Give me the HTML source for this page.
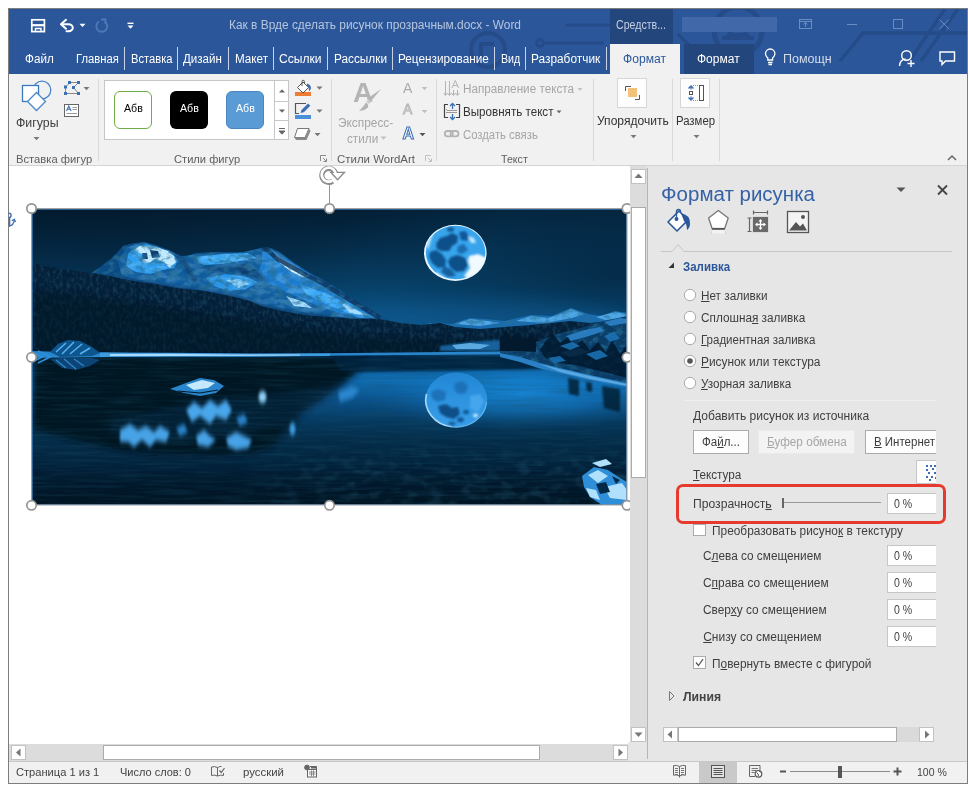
<!DOCTYPE html>
<html lang="ru">
<head>
<meta charset="utf-8">
<title>Word</title>
<style>
html,body{margin:0;padding:0;background:#fff;}
body{width:968px;height:792px;overflow:hidden;font-family:"Liberation Sans",sans-serif;}
#root{position:relative;width:968px;height:792px;overflow:hidden;background:#fff;}
.a{position:absolute;box-sizing:border-box;}
.t{position:absolute;white-space:nowrap;transform-origin:0 50%;display:inline-block;font-family:"Liberation Sans",sans-serif;}
u{text-decoration:underline;text-underline-offset:1px;}
svg{position:absolute;overflow:visible;}
</style>
</head>
<body>
<div id="root">
<!-- window frame -->
<div class="a" style="left:8px;top:8px;width:960px;height:776px;background:#f1f1f1;border:1px solid #7d7d7d;"></div>
<!-- title + tab bar -->
<div class="a" style="left:9px;top:9px;width:958px;height:65px;background:#2b579a;overflow:hidden;">
  <!-- faint circuit decoration -->
  <svg width="958" height="65" viewBox="9 9 958 65" style="left:0;top:0;">
    <g fill="none" stroke="#254c89" stroke-width="3">
      <path d="M566 25 H615 M545 43 H604"/>
      <circle cx="540" cy="43" r="3.5"/>
      <circle cx="488" cy="50" r="17" stroke-width="4"/>
      <path d="M481 60 V44 H494" stroke-width="4"/>
      <path d="M678 34 q22 26 58 26 M690 50 q14 12 40 14"/>
      <circle cx="738" cy="31" r="24" stroke-width="5"/>
      <path d="M722 38 h32 M738 22 l-9 13 h18 z" stroke-width="4"/>
      <path d="M840 61 L863 33 H967 M910 60 L945 9 M921 61 L958 9" stroke-width="3.5"/>
    </g>
  </svg>
</div>
<!-- contextual "Средств..." -->
<div class="a" style="left:610px;top:9px;width:63px;height:35px;background:#23467c;"></div>
<!-- blurred account rect -->
<div class="a" style="left:682px;top:17px;width:95px;height:15px;background:#4168a8;"></div>
<!-- active tab -->
<div class="a" style="left:610px;top:44px;width:70px;height:31px;background:#f1f1f1;"></div>
<!-- second Format tab dark -->
<div class="a" style="left:684px;top:44px;width:70px;height:30px;background:#23467c;"></div>
<!-- tab separators -->
<div class="a" style="left:124px;top:47px;width:1px;height:23px;background:#c9d3e6;"></div>
<div class="a" style="left:177px;top:47px;width:1px;height:23px;background:#c9d3e6;"></div>
<div class="a" style="left:228px;top:47px;width:1px;height:23px;background:#c9d3e6;"></div>
<div class="a" style="left:273px;top:47px;width:1px;height:23px;background:#c9d3e6;"></div>
<div class="a" style="left:327px;top:47px;width:1px;height:23px;background:#c9d3e6;"></div>
<div class="a" style="left:392px;top:47px;width:1px;height:23px;background:#c9d3e6;"></div>
<div class="a" style="left:494px;top:47px;width:1px;height:23px;background:#c9d3e6;"></div>
<div class="a" style="left:525px;top:47px;width:1px;height:23px;background:#c9d3e6;"></div>
<div class="a" style="left:606px;top:47px;width:1px;height:23px;background:#c9d3e6;"></div>
<!-- ribbon bottom border -->
<div class="a" style="left:9px;top:165px;width:958px;height:1px;background:#d4d4d4;"></div>
<!-- group separators -->
<div class="a" style="left:98px;top:79px;width:1px;height:82px;background:#d9d9d9;"></div>
<div class="a" style="left:331px;top:79px;width:1px;height:82px;background:#d9d9d9;"></div>
<div class="a" style="left:436px;top:79px;width:1px;height:82px;background:#d9d9d9;"></div>
<div class="a" style="left:593px;top:79px;width:1px;height:82px;background:#d9d9d9;"></div>
<div class="a" style="left:672px;top:79px;width:1px;height:82px;background:#d9d9d9;"></div>
<div class="a" style="left:719px;top:79px;width:1px;height:82px;background:#d9d9d9;"></div>
<!-- style gallery -->
<div class="a" style="left:104px;top:80px;width:185px;height:60px;background:#fff;border:1px solid #c6c6c6;"></div>
<div class="a" style="left:274px;top:80px;width:1px;height:60px;background:#c6c6c6;"></div>
<div class="a" style="left:274px;top:101px;width:15px;height:1px;background:#c6c6c6;"></div>
<div class="a" style="left:274px;top:120px;width:15px;height:1px;background:#c6c6c6;"></div>
<div class="a" style="left:114px;top:91px;width:38px;height:38px;background:#fff;border:1px solid #70ad47;border-radius:6px;"></div>
<div class="a" style="left:170px;top:91px;width:38px;height:38px;background:#000;border-radius:6px;"></div>
<div class="a" style="left:226px;top:91px;width:38px;height:38px;background:#5b9bd5;border:1px solid #4a86c0;border-radius:6px;"></div>
<!-- arrange / size icon boxes -->
<div class="a" style="left:617px;top:78px;width:30px;height:30px;background:#fdfdfd;border:1px solid #d6d6d6;"></div>
<div class="a" style="left:680px;top:78px;width:30px;height:30px;background:#fdfdfd;border:1px solid #d6d6d6;"></div>
<!-- document area -->
<div class="a" style="left:9px;top:166px;width:621px;height:578px;background:#fff;"></div>
<!-- vertical scrollbar -->
<div class="a" style="left:630px;top:166px;width:17px;height:576px;background:#dcdcdc;"></div>
<div class="a" style="left:631px;top:169px;width:15px;height:15px;background:#fff;border:1px solid #c2c2c2;"></div>
<div class="a" style="left:631px;top:207px;width:15px;height:271px;background:#fff;border:1px solid #ababab;"></div>
<div class="a" style="left:631px;top:727px;width:15px;height:15px;background:#fff;border:1px solid #c2c2c2;"></div>
<div class="a" style="left:628px;top:742px;width:19px;height:19px;background:#e6e6e6;"></div>
<!-- horizontal scrollbar -->
<div class="a" style="left:9px;top:744px;width:619px;height:17px;background:#dcdcdc;"></div>
<div class="a" style="left:11px;top:745px;width:15px;height:15px;background:#fff;border:1px solid #c2c2c2;"></div>
<div class="a" style="left:103px;top:745px;width:437px;height:15px;background:#fff;border:1px solid #ababab;"></div>
<div class="a" style="left:613px;top:745px;width:15px;height:15px;background:#fff;border:1px solid #c2c2c2;"></div>
<!-- pane bg -->
<div class="a" style="left:647px;top:166px;width:320px;height:595px;background:#e6e6e6;"></div>
<div class="a" style="left:647px;top:168px;width:1px;height:591px;background:#b5b5b5;"></div>

<!-- chrome icons overlay -->
<svg class="a" style="left:0;top:0;" width="968" height="170" viewBox="0 0 968 170">
  <!-- save -->
  <g fill="none" stroke="#fff" stroke-width="1.7">
    <rect x="31.8" y="19.800" width="12.600" height="11.800"/>
    <path d="M31 25.200 h14" stroke-width="2.200"/>
    <path d="M35.500 31.500 v-3 h5.500 v3" stroke-width="1.400"/>
  </g>
  <!-- undo -->
  <g fill="none" stroke="#fff" stroke-width="2" stroke-linecap="round" stroke-linejoin="round">
    <path d="M66 19.800 L61 24.300 L66 28.800"/>
    <path d="M61.500 24.300 H68.500 a4.300 3.500 0 0 1 0 7 H66.500"/>
  </g>
  <path d="M79.500 23.800 h6 l-3 3.200 z" fill="#fff"/>
  <!-- redo (dim) -->
  <g fill="none" stroke="#4f78b7" stroke-width="1.800">
    <path d="M99 21.500 a5.500 5.500 0 1 0 5.500 0"/>
    <path d="M101 19.500 h4.500 v4.500"/>
  </g>
  <!-- customize QAT -->
  <path d="M127.500 23.300 h6" stroke="#fff" stroke-width="1.400"/>
  <path d="M127.500 25.600 h6 l-3 3.200 z" fill="#fff"/>
  <!-- window controls (dim) -->
  <g fill="none" stroke="#6a8dc6" stroke-width="1">
    <rect x="799.500" y="19.500" width="12" height="9"/>
    <path d="M799.500 21.500 h12 M805.500 27 v-4 M803.500 24.500 l2 -2 l2 2"/>
    <path d="M847 24.500 h10"/>
    <rect x="893.500" y="19.500" width="9" height="9"/>
    <path d="M939.500 19.500 l9.500 9.500 M949 19.500 l-9.500 9.500"/>
  </g>
  <!-- lightbulb -->
  <g fill="none" stroke="#fff" stroke-width="1.300">
    <path d="M767.800 60 v-2 q-2.300 -2 -2.300 -4.300 a4.700 4.700 0 0 1 9.400 0 q0 2.300 -2.300 4.300 v2 z"/>
    <path d="M768 62.500 h4.500 M768.500 64.500 h3.500"/>
  </g>
  <!-- share -->
  <g fill="none" stroke="#fff" stroke-width="1.400">
    <circle cx="906.500" cy="55.500" r="4.800"/>
    <path d="M899.500 66 q0.500 -6.500 6 -7"/>
    <path d="M907.500 63.500 h7 M911 60 v7"/>
  </g>
  <!-- comment -->
  <path d="M940 52 h14.500 v9 h-9 l-3.500 3.500 v-3.500 h-2 z" fill="none" stroke="#fff" stroke-width="1.400"/>

  <!-- shapes big icon -->
  <g fill="#fff" stroke="#4a86c8" stroke-width="1.300">
    <circle cx="42" cy="90" r="8.800" fill="none"/>
    <rect x="22.500" y="85.500" width="16" height="16" stroke="#3c78c0"/>
    <path d="M36.500 92.500 L45.500 101.500 L36.500 110.500 L27.500 101.500 Z"/>
  </g>
  <path d="M33.500 137 h6 l-3 3.200 z" fill="#777"/>
  <!-- edit shape -->
  <g stroke="#8a8a8a" stroke-width="1" fill="none">
    <path d="M70 82.500 H78.500 M78.500 82.500 L73.500 87.500 L78.500 93.500 M78.500 93.500 H66 M65.500 93 V87 M66 86.500 L69.500 83"/>
  </g>
  <g fill="#3c6eb4">
    <rect x="68" y="81" width="3" height="3"/><rect x="77" y="81" width="3" height="3"/>
    <rect x="64" y="85.500" width="3" height="3"/><rect x="72" y="86" width="3" height="3"/>
    <rect x="64" y="92" width="3" height="3"/><rect x="77" y="92" width="3" height="3"/>
  </g>
  <path d="M83.500 87 h6 l-3 3.200 z" fill="#777"/>
  <!-- text box icon -->
  <rect x="64.500" y="104.500" width="14" height="12" fill="#fff" stroke="#666" stroke-width="1"/>
  <path d="M66.500 111 l2.300 -5 l2.300 5 M67.300 109.300 h3" fill="none" stroke="#3c6eb4" stroke-width="1.100"/>
  <path d="M72.500 107.500 h4.500 M72.500 109.500 h4.500 M66.500 113.500 h10.500" stroke="#999" stroke-width="1"/>
  <!-- gallery scroll arrows -->
  <path d="M279 92.500 h6 l-3 -3.200 z" fill="#666"/>
  <path d="M279 109.500 h6 l-3 3.200 z" fill="#666"/>
  <path d="M279 128.500 h6 M279 131 h6 l-3 3.200 z" fill="#666" stroke="#666" stroke-width="1"/>
  <!-- shape fill -->
  <rect x="295" y="92" width="16" height="4" fill="#ed7d31"/>
  <path d="M297.500 87.500 L303 82 L308.500 87.500 L303 93 Z" fill="#fff" stroke="#555" stroke-width="1"/>
  <path d="M302 86 V81.500 a1.200 1.200 0 0 1 2.400 0 V84" fill="none" stroke="#555" stroke-width="1"/>
  <path d="M307 83.500 q4 1 4 5 l-1.800 3 q0 -4 -2.200 -6 z" fill="#3c6eb4"/>
  <path d="M316.500 86.500 h6 l-3 3.200 z" fill="#777"/>
  <!-- shape outline -->
  <rect x="295" y="115" width="16" height="4" fill="#4a90d9"/>
  <path d="M306 103.500 H295.500 V113.500 H299" fill="none" stroke="#555" stroke-width="1.200"/>
  <path d="M300.500 113 L301.500 110 L308 103.500 L310.300 105.800 L303.800 112.300 Z" fill="#3c6eb4"/>
  <path d="M316.500 109.500 h6 l-3 3.200 z" fill="#777"/>
  <!-- shape effects -->
  <path d="M297.500 128.500 H309 L305 137.500 H294.500 Z" fill="#fff" stroke="#777" stroke-width="1"/>
  <path d="M309 128.500 L310.500 131 L306.500 140 L305 137.500 Z M294.500 137.500 H305 L306.500 140 H296 Z" fill="#8a8a8a"/>
  <path d="M314.500 133 h6 l-3 3.200 z" fill="#777"/>
  <!-- dialog launchers -->
  <g fill="none" stroke="#8a8a8a" stroke-width="1">
    <path d="M320.500 161 V155.500 H326"/><path d="M323 158 l3.500 3.500 M326.500 158.500 v3 h-3"/>
  </g>
  <g fill="none" stroke="#c0c0c0" stroke-width="1">
    <path d="M425.500 161 V155.500 H431"/><path d="M428 158 l3.500 3.500 M431.500 158.500 v3 h-3"/>
  </g>
  <!-- WordArt quick styles icon -->
  <text x="353" y="102" font-family="Liberation Sans, sans-serif" font-size="28" font-weight="bold" fill="#b4b4b4">A</text>
  <path d="M381 89 L372 100 L369 97.500 Z" fill="#b4b4b4"/>
  <path d="M368.500 99 L371 101.500 L369 104 L366.500 101.500 Z" fill="#c8c8c8"/>
  <path d="M366 102.500 q3 2 2 5 q-3 3 -9 3.500 q5 -5 7 -8.500 z" fill="#b4b4b4"/>
  <path d="M380.500 136.500 h6 l-3 3.200 z" fill="#c0c0c0"/>
  <!-- small A icons -->
  <text x="403" y="92.600" font-family="Liberation Sans, sans-serif" font-size="14" fill="#ababab">A</text>
  <text x="403" y="113.600" font-family="Liberation Sans, sans-serif" font-size="14" fill="#f1f1f1" stroke="#b4b4b4" stroke-width="0.9">A</text>
  <text x="402.500" y="139" font-family="Liberation Sans, sans-serif" font-size="16" font-weight="bold" fill="#fff" stroke="#3c6eb4" stroke-width="1">A</text>
  <path d="M421.500 87 h6 l-3 3.200 z" fill="#c0c0c0"/>
  <path d="M421.500 110 h6 l-3 3.200 z" fill="#c0c0c0"/>
  <path d="M419.500 133 h6 l-3 3.200 z" fill="#555"/>
  <!-- text direction icon -->
  <g fill="none" stroke="#b4b4b4" stroke-width="1">
    <path d="M445.500 81 V95 M449.500 81 V95 M453.500 90 V95 M457.500 90 V95"/>
    <path d="M443.500 93 l2 2.500 l2 -2.500 M447.500 93 l2 2.500 l2 -2.500 M451.500 93 l2 2.500 l2 -2.500 M455.500 93 l2 2.500 l2 -2.500"/>
    <path d="M452 88 l3.300 -7.500 l3.300 7.500 M453.200 85.500 h4.200"/>
  </g>
  <!-- align text icon -->
  <g fill="none" stroke="#444" stroke-width="1.200">
    <path d="M448 104.500 H444.500 V117.500 H448 M456 104.500 H459.500 V117.500 H456"/>
  </g>
  <path d="M447 110.500 h10 M447 112.500 h10" stroke="#999" stroke-width="1"/>
  <path d="M446.500 109 v1 M446.500 112 v1" stroke="#999"/>
  <g stroke="#3c6eb4" stroke-width="1.300" fill="none">
    <path d="M452.500 109 V104 M450 106 l2.500 -2.500 l2.500 2.500"/>
    <path d="M452.500 114 V119 M450 117 l2.500 2.500 l2.500 -2.500"/>
  </g>
  <!-- link icon -->
  <g fill="none" stroke="#b4b4b4" stroke-width="1.800">
    <rect x="444.800" y="131" width="8" height="5.400" rx="2.700"/>
    <rect x="450.500" y="131" width="8" height="5.400" rx="2.700"/>
  </g>
  <!-- dropdown arrows after labels -->
  <path d="M577.500 88 h5 l-2.500 2.800 z" fill="#c0c0c0"/>
  <path d="M556.500 110.500 h5 l-2.500 2.800 z" fill="#666"/>
  <!-- arrange icon -->
  <rect x="628" y="88" width="9" height="9" fill="#f2c27a"/>
  <path d="M625.500 91 V86.500 H631 M635 99.500 H639.500 V95" fill="none" stroke="#555" stroke-width="1"/>
  <path d="M630.500 135 h6 l-3 3.200 z" fill="#777"/>
  <!-- size icon -->
  <rect x="699.500" y="85.500" width="4" height="15" fill="#fff" stroke="#555" stroke-width="1"/>
  <path d="M693 85.500 h5.500 M693 100.500 h5.500" stroke="#999" stroke-width="1" stroke-dasharray="1 1"/>
  <rect x="689.500" y="91.500" width="3" height="3" fill="#fff" stroke="#555" stroke-width="1"/>
  <path d="M688.500 88.500 l2.500 -2.500 l2.500 2.500 M691 86.500 v3 M688.500 97.500 l2.500 2.500 l2.500 -2.500 M691 99.500 v-3" fill="none" stroke="#3c6eb4" stroke-width="1.300"/>
  <path d="M693.500 135 h6 l-3 3.200 z" fill="#777"/>
  <!-- collapse ribbon chevron -->
  <path d="M948 160 l4 -4 l4 4" fill="none" stroke="#666" stroke-width="1.500"/>
</svg>
<!-- picture -->
<svg class="a" style="left:32px;top:209px;" width="595" height="296" viewBox="32 209 595 296">
<defs>
  <linearGradient id="sky" x1="0" y1="0" x2="0" y2="1">
    <stop offset="0" stop-color="#04253e"/><stop offset="0.21" stop-color="#053354"/><stop offset="0.41" stop-color="#073f66"/><stop offset="0.61" stop-color="#084874"/><stop offset="0.71" stop-color="#0a4e7e"/><stop offset="1" stop-color="#0b5388"/>
  </linearGradient>
  <radialGradient id="skyr" cx="1" cy="0.45" r="0.45">
    <stop offset="0" stop-color="#020f1d" stop-opacity="0.42"/><stop offset="1" stop-color="#020f1d" stop-opacity="0"/>
  </radialGradient>
  <radialGradient id="skyd" cx="0.1" cy="0.05" r="0.7">
    <stop offset="0" stop-color="#020f1d" stop-opacity="0.5"/><stop offset="0.6" stop-color="#020f1d" stop-opacity="0.3"/><stop offset="1" stop-color="#020f1d" stop-opacity="0"/>
  </radialGradient>
  <linearGradient id="lake" x1="0" y1="0" x2="0" y2="1">
    <stop offset="0" stop-color="#0a4a7c"/><stop offset="0.11" stop-color="#0e66a8"/><stop offset="0.17" stop-color="#1070b8"/><stop offset="0.31" stop-color="#0a5088"/><stop offset="0.44" stop-color="#063a60"/><stop offset="0.57" stop-color="#042c48"/><stop offset="0.76" stop-color="#03223a"/><stop offset="1" stop-color="#021826"/>
  </linearGradient>
  <radialGradient id="lglow" cx="0.5" cy="0.5" r="0.5">
    <stop offset="0" stop-color="#1a8ee0" stop-opacity="0.75"/><stop offset="0.5" stop-color="#1580cc" stop-opacity="0.5"/><stop offset="1" stop-color="#0f5c98" stop-opacity="0"/>
  </radialGradient>
  <radialGradient id="moon" cx="0.45" cy="0.45" r="0.62">
    <stop offset="0" stop-color="#5cb2f0"/><stop offset="0.7" stop-color="#8fd0fa"/><stop offset="1" stop-color="#f4fcff"/>
  </radialGradient>
  <filter id="b05" x="-10%" y="-10%" width="120%" height="120%"><feGaussianBlur stdDeviation="0.6"/></filter>
  <filter id="b1" x="-10%" y="-10%" width="120%" height="120%"><feGaussianBlur stdDeviation="1.2"/></filter>
  <filter id="bv" x="-10%" y="-30%" width="120%" height="160%"><feGaussianBlur stdDeviation="0.8 2.5"/></filter>
  <filter id="b3" x="-20%" y="-20%" width="140%" height="140%"><feGaussianBlur stdDeviation="3"/></filter>
  <filter id="b8" x="-30%" y="-30%" width="160%" height="160%"><feGaussianBlur stdDeviation="8"/></filter>
  <!-- white mottled snow texture clipped to shape -->
  <filter id="snow" x="0" y="0" width="100%" height="100%">
    <feTurbulence type="fractalNoise" baseFrequency="0.09 0.16" numOctaves="3" seed="7" result="n"/>
    <feColorMatrix in="n" type="matrix" values="0 0 0 0 0.35  0 0 0 0 0.72  0 0 0 0 1  3.4 0 0 0 -1.3"/>
    <feComposite in2="SourceGraphic" operator="in"/>
  </filter>
  <filter id="snow2" x="0" y="0" width="100%" height="100%">
    <feTurbulence type="fractalNoise" baseFrequency="0.13 0.2" numOctaves="3" seed="11" result="n"/>
    <feColorMatrix in="n" type="matrix" values="0 0 0 0 0.02  0 0 0 0 0.16  0 0 0 0 0.30  0 3.4 0 0 -1.5"/>
    <feComposite in2="SourceGraphic" operator="in"/>
  </filter>
  <filter id="trees" x="0" y="0" width="100%" height="100%">
    <feTurbulence type="fractalNoise" baseFrequency="0.3 0.18" numOctaves="3" seed="5" result="n"/>
    <feColorMatrix in="n" type="matrix" values="0 0 0 0 0.05  0 0 0 0 0.28  0 0 0 0 0.47  0 0 3 0 -1.25"/>
    <feComposite in2="SourceGraphic" operator="in"/>
  </filter>
  <filter id="ripple" x="0" y="0" width="100%" height="100%">
    <feTurbulence type="fractalNoise" baseFrequency="0.02 0.35" numOctaves="2" seed="2" result="n"/>
    <feColorMatrix in="n" type="matrix" values="0 0 0 0 0.01  0 0 0 0 0.08  0 0 0 0 0.15  0 0 2.4 0 -1.0"/>
    <feComposite in2="SourceGraphic" operator="in"/>
  </filter>
  <filter id="rocks" x="0" y="0" width="100%" height="100%">
    <feTurbulence type="fractalNoise" baseFrequency="0.07 0.12" numOctaves="2" seed="9" result="n"/>
    <feColorMatrix in="n" type="matrix" values="0 0 0 0 0.06  0 0 0 0 0.27  0 0 0 0 0.43  0 0 3.5 0 -1.6"/>
    <feComposite in2="SourceGraphic" operator="in"/>
  </filter>
  <linearGradient id="rkg" x1="0" y1="0" x2="1" y2="0"><stop offset="0.3" stop-color="#000"/><stop offset="0.55" stop-color="#fff"/><stop offset="1" stop-color="#fff"/></linearGradient>
  <linearGradient id="rkg2" x1="0" y1="0" x2="0" y2="1"><stop offset="0" stop-color="#000"/><stop offset="0.4" stop-color="#fff"/></linearGradient>
  <mask id="rkm" maskUnits="userSpaceOnUse" x="32" y="440" width="595" height="65"><rect x="32" y="440" width="595" height="65" fill="url(#rkg)"/><rect x="32" y="440" width="595" height="65" fill="url(#rkg2)" style="mix-blend-mode:multiply"/></mask>
  <linearGradient id="mrefl" x1="0" y1="0" x2="0" y2="1"><stop offset="0" stop-color="#2185d2"/><stop offset="0.5" stop-color="#2e94e0"/><stop offset="1" stop-color="#3a9ee8"/></linearGradient>
  <clipPath id="pc"><rect x="32" y="209" width="595" height="296"/></clipPath>
  <clipPath id="mc"><ellipse cx="455.5" cy="252.6" rx="30.5" ry="27"/></clipPath>
  <clipPath id="mc2"><ellipse cx="456" cy="400.3" rx="30.5" ry="27.3"/></clipPath>
</defs>
<g clip-path="url(#pc)">
  <!-- sky -->
  <rect x="32" y="209" width="595" height="150" fill="url(#sky)"/>
  <rect x="32" y="209" width="595" height="150" fill="url(#skyd)"/>
  <rect x="32" y="209" width="595" height="150" fill="url(#skyr)"/>
  <ellipse cx="470" cy="320" rx="150" ry="22" fill="#1266a4" opacity="0.25" filter="url(#b8)"/>
  <!-- distant right mountains -->
  <path id="dm" d="M405 330 L430 323 L452 324 L470 318 L485 319 L505 321 L531 315 L552 316 L571 308 L588 314 L601 316 L615 311 L627 313 L627 340 L405 340 Z" fill="#1a6cb0"/>
  <path d="M455 324 L470 319 L488 321 L500 323 L480 326 Z M516 321 L531 316 L548 318 L560 314 L571 309 L584 314 L572 318 L545 323 Z M596 317 L615 312 L627 314 L627 318 L605 320 Z" fill="#4fa6e4" filter="url(#b05)"/>
  <use href="#dm" filter="url(#snow2)" opacity="0.6"/>
  <!-- main mountains: shadowed base -->
  <path id="mt" d="M90 274 L100 267 L112 258 L123 246 L134 243 L144 242 L156 245 L169 250 L176 254 L182 256 L190 255 L196 253 L217 252 L240 252 L251 251 L260 248 L266 247 L274 249 L281 253 L292 261 L307 271 L322 279 L340 290 L360 303 L380 316 L398 326 L398 340 L90 340 Z" fill="#0c4a82"/>
  <!-- mid blue body -->
  <path id="mt2" d="M118 262 L126 248 L136 244 L146 243 L168 250 L182 257 L196 254 L240 253 L262 248 L272 250 L290 262 L322 281 L360 304 L382 318 L350 318 L300 312 L260 304 L230 295 L200 290 L170 286 L140 280 L122 276 Z" fill="#105c9e"/>
  <!-- bright snow masses -->
  <g filter="url(#b05)">
    <path d="M128 254 L136 246 L146 244 L160 248 L172 253 L178 260 L174 268 L162 270 L150 274 L136 272 L126 266 Z" fill="#2f9ef0"/>
    <path d="M134 250 L140 245.500 L156 247 L168 251 L174 256 L176 262 L170 268 L164 262 L154 259 L150 263 L142 262 L144 255 Z" fill="#c8ecff"/>
    <path d="M196 257 L222 254 L248 253 L256 258 L240 261 L220 264 L204 265 L198 262 Z" fill="#3aa8f6"/>
    <path d="M206 278 L226 274 L244 276 L258 282 L246 289 L230 291 L214 286 Z" fill="#2a96ea"/>
    <path d="M226 280 L240 279 L250 284 L238 288 Z" fill="#8fd4ff"/>
    <path d="M262 250 L270 249 L282 255 L296 265 L312 275 L330 286 L350 298 L370 311 L380 317 L362 318 L340 313 L318 306 L300 298 L282 290 L266 282 L258 272 L262 262 Z" fill="#1a7cd0"/>
    <path d="M274 254 L286 261 L300 270 L310 277 L302 277 L290 271 L280 263 Z" fill="#e6f6ff"/>
    <path d="M300 284 L322 292 L344 302 L362 312 L374 317 L350 314 L326 304 L306 294 Z" fill="#3aa8f6"/>
    <path d="M286 296 L304 302 L312 308 L294 306 Z M340 302 L362 313 L370 316 L350 313 Z" fill="#a6dcff"/>
    <path d="M150 250 L158 251 L160 257 L152 258 Z M142 253 L147 253 L148 259 L143 259 Z M232 266 L246 264 L256 270 L244 275 Z" fill="#0b4172"/>
  </g>
  <use href="#mt2" filter="url(#snow)" opacity="0.25"/>
  <path d="M262 249 L268 250 L276 258 L290 266 L306 275 L322 283 L340 294 L360 306 L380 318" fill="none" stroke="#08335c" stroke-width="4.500" opacity="0.85" filter="url(#b05)"/>
  <path d="M176 256 L184 262 L190 274 L196 282" fill="none" stroke="#0b3f70" stroke-width="6" opacity="0.7" filter="url(#b1)"/>
  <path d="M200 266 L230 266 L260 272 L270 282 L240 274 L210 272 Z" fill="#0b4172" opacity="0.6" filter="url(#b1)"/>
  <use href="#mt" filter="url(#snow2)" opacity="0.7"/>
  <path d="M93 273 L123 277 L156 281 L176 285 L205 288 L230 293 L250 298 L261 303 L282 308 L304 312 L330 314 L330 320 L93 290 Z" fill="#0d4a80" opacity="0.55" filter="url(#b1)"/>
  <!-- forest -->
  <path id="fr" d="M32 262 L44 266 L60 268 L75 271 L93 273 L110 276 L123 279 L140 282 L156 284 L176 288 L205 291 L230 296 L250 301 L261 306 L282 311 L304 315 L330 317 L355 319 L380 319 L400 323 L420 325 L440 323 L455 327 L480 329 L505 327 L530 325 L552 323 L570 321 L590 323 L610 321 L627 319 L627 358 L32 358 Z" fill="#041f38"/>
  <use href="#fr" filter="url(#trees)" opacity="0.2"/>
  <path d="M32 290 L120 300 L261 322 L360 336 L460 340 L540 342 L540 354 L32 354 Z" fill="#021321" opacity="0.55" filter="url(#b3)"/>
  <!-- far-right snowy slope with trees -->
  <path d="M440 346 L470 342 L500 340 L500 351 L480 351 L440 351 Z" fill="#1c6db0" opacity="0.85" filter="url(#b1)"/>
  <path d="M452 345 L470 343 L490 345 L480 349 L456 349 Z" fill="#6cbcf2" opacity="0.8" filter="url(#b05)"/>
  <path d="M500 338 L506 330 L512 338 L518 332 L524 340 L532 334 L540 342 L540 353 L500 353 Z" fill="#031a2e"/>
  <!-- lake -->
  <rect x="32" y="355" width="595" height="150" fill="url(#lake)"/>
  <ellipse cx="520" cy="394" rx="160" ry="36" fill="url(#lglow)"/>
  <!-- dark reflection of forest on the left -->
  <path d="M32 355 L372 355 L362 368 L342 386 L322 400 L304 412 L288 430 L272 446 L251 453 L200 455 L150 453 L119 450 L80 441 L32 430 Z" fill="#021322" filter="url(#b3)"/>
  <path d="M330 355 L540 356 L556 362 L540 369 L440 371 L362 372 L340 370 Z" fill="#04233d" opacity="0.92" filter="url(#b1)"/>
  <path d="M362 380 L350 396 L330 408 L300 420 L270 428 L240 436 L200 440 L150 440 L110 434 L110 420 L150 412 L200 400 L250 396 L300 390 L340 382 Z" fill="#0b4373" opacity="0.25" filter="url(#b3)"/>
  <!-- bottom darkness -->
  <rect x="20" y="475" width="620" height="50" fill="#01111f" opacity="0.3" filter="url(#b8)"/>
  <rect x="32" y="357" width="595" height="148" fill="#fff" filter="url(#ripple)" opacity="0.3"/>
  <!-- mountain reflection bright blobs -->
  <g filter="url(#bv)">
    <path d="M120 430 L130 424 L138 430 L146 426 L154 432 L160 426 L170 432 L166 442 L156 440 L150 447 L142 440 L134 447 L128 442 L120 442 Z" fill="#46a2e6"/>
    <path d="M186 410 L194 402 L202 408 L210 400 L218 406 L226 400 L232 410 L226 420 L216 416 L210 424 L200 416 L192 422 Z" fill="#4aa6ea"/>
    <path d="M196 436 L204 430 L210 436 L216 440 L208 447 L198 445 Z M226 438 L236 432 L244 436 L252 440 L248 448 L236 450 L228 446 Z" fill="#46a2e6"/>
    <path d="M176 428 L184 424 L188 432 L180 436 Z M236 418 L244 414 L248 422 L240 426 Z" fill="#2a84cc"/>
    <ellipse cx="262.500" cy="397" rx="4" ry="6" fill="#8fd0f8"/>
    <ellipse cx="292.500" cy="429" rx="3" ry="6.500" fill="#3c9be0"/>
    <path d="M338 392 L352 386 L360 390 L352 398 L340 402 Z" fill="#2a86cc"/>
  </g>
  <!-- island -->
  <path d="M170 389 L186 383 L200 378 L214 380 L224 386 L216 393 L200 396 L184 393 Z" fill="#2b86cc" filter="url(#b05)"/>
  <path d="M186 385 L202 380 L215 383 L208 388 L194 390 Z" fill="#c4e8fc" filter="url(#b05)"/>
  <path d="M178 391 L200 393 L218 390" fill="none" stroke="#031a2d" stroke-width="1.200"/>
  <!-- shoreline -->
  <path d="M32 351 L60 352 L104 352.500 L130 353 L170 353.500 L250 354 L400 352.500 L500 351.500 L540 352 L540 354.500 L400 355 L250 356.500 L170 356.500 L110 357 L60 357.500 L32 358 Z" fill="#2a86cc" filter="url(#b05)"/>
  <path d="M100 352.500 L170 352.800 L250 353.500 L330 353.500 L330 356 L250 356.500 L170 356.500 L100 357 Z" fill="#3c9be0" filter="url(#b05)"/>
  <path d="M110 354 L170 353.800 L230 354.500 L300 354.500 L300 355.500 L170 356 L110 356 Z" fill="#a8dafa" filter="url(#b05)"/>
  <path d="M50 352 L58 344 L68 340 L80 341 L92 347 L100 353 L92 356 L60 357 Z" fill="#11558f" filter="url(#b05)"/>
  <g fill="none" stroke="#58b0ee" stroke-width="1.500" filter="url(#b05)">
    <path d="M56 352 L66 343 M62 354 L74 342 M70 354 L82 344 M80 354 L90 348"/>
  </g>
  <path d="M50 359 L60 358 L92 358 L100 360 L90 366 L76 370 L62 368 Z" fill="#0d4a7e" opacity="0.9" filter="url(#b05)"/>
  <g fill="none" stroke="#3c96dc" stroke-width="1.300" opacity="0.8" filter="url(#b05)">
    <path d="M56 360 L66 368 M64 359 L76 369 M74 359 L84 366"/>
  </g>
  <path d="M34 353 L42 357 L34 361 M38 351 L50 357 L38 363" fill="none" stroke="#2f8fdc" stroke-width="1.800" filter="url(#b05)"/>
  <!-- right shore (drawn over lake) -->
  <path id="rs" d="M536 342 L560 333 L580 328 L600 322 L627 316 L627 386 L590 378 L560 371 L540 366 L520 360 L500 355 L500 352 L536 352 Z" fill="#0a3c66"/>
  <use href="#rs" filter="url(#snow2)" opacity="0.6"/>
  <path d="M566 336 L585 330 L600 327 L604 331 L586 337 L570 341 Z M604 322 L620 318 L627 319 L627 323 L610 326 Z M560 352 L580 348 L590 352 L570 357 Z" fill="#2f86cc" opacity="0.85" filter="url(#b05)"/>
  <path d="M545 342 L553 334 L560 343 L568 337 L574 347 L582 340 L590 350 L598 342 L606 352 L612 340 L620 354 L627 344 L627 378 L604 372 L580 366 L556 362 L545 358 L540 350 Z" fill="#03192b" opacity="0.8" filter="url(#b05)"/>
  <path d="M560 346 L572 342 L580 346 L570 350 Z M586 354 L600 350 L608 356 L596 360 Z M604 336 L614 332 L620 338 L610 342 Z M548 358 L560 356 L566 361 L554 363 Z" fill="#1f74b8" opacity="0.85" filter="url(#b05)"/>
  <path d="M500 353 L520 357 L540 363 L560 368 L590 375 L627 383 L627 387 L590 380 L560 373 L538 368 L520 362 L500 357 Z" fill="#2a80c4" filter="url(#b05)"/>
  <path d="M540 364 L560 369 L590 376 L627 384 L627 386 L590 379 L560 372 Z" fill="#6cb8ec" opacity="0.7" filter="url(#b05)"/>
  <path d="M568 378 L579 380 L579 396 L569 394 Z M602 386 L620 389 L620 412 L604 408 Z M586 382 L592 383 L592 392 L587 391 Z" fill="#031a2e" opacity="0.8" filter="url(#b1)"/>
  <!-- moon -->
  <ellipse cx="455.300" cy="252.900" rx="31.300" ry="28.100" fill="#eaf7ff"/>
  <ellipse cx="455.600" cy="252.500" rx="29.800" ry="26.700" fill="#38a4ec"/>
  <g clip-path="url(#mc)" filter="url(#b1)">
    <ellipse cx="450.500" cy="229.500" rx="3.500" ry="2.200" fill="#0f5590"/>
    <path d="M436 244 L440 238 L447 236 L452 233 L458 236 L457 243 L452 246 L449 251 L442 251 L437 249 Z" fill="#0d4f88"/>
    <path d="M459 232 L465 231 L469 236 L467 241 L461 240 Z" fill="#11599a"/>
    <path d="M430 252 L436 250 L442 254 L446 260 L445 267 L438 268 L432 263 L429 257 Z" fill="#0f5590"/>
    <path d="M451 257 L458 255 L465 258 L468 265 L464 271 L456 272 L450 267 L448 261 Z" fill="#0d4f88"/>
    <path d="M444 266 L452 270 L456 276 L448 277 L441 272 Z" fill="#13609e"/>
    <path d="M458 246 L464 244 L468 250 L462 254 L457 252 Z" fill="#1a6cb0"/>
    <path d="M469 256 L478 254 L487 258 L487 268 L480 276 L470 280 L464 276 L470 268 L468 261 Z" fill="#f0faff"/>
    <path d="M436 272 L446 279 L458 282 L470 280 L462 284 L446 283 L434 276 Z" fill="#dff3ff"/>
    <path d="M468 236 L474 238 L476 243 L471 243 Z" fill="#c4e8fc"/>
    <path d="M426 244 L428 236 L434 230 L431 240 L428 250 Z" fill="#bfe6fc"/>
  </g>
  <!-- moon reflection -->
  <ellipse cx="456.300" cy="399.900" rx="30.900" ry="27.500" fill="url(#mrefl)"/>
  <path d="M426.500 394 A30.400 27 0 0 0 452 426.800" fill="none" stroke="#a6dafa" stroke-width="1.600" filter="url(#b05)"/>
  <path d="M452 426.800 A30.400 27 0 0 0 486.500 402" fill="none" stroke="#6cbcf2" stroke-width="1.200" opacity="0.8" filter="url(#b05)"/>
  <g clip-path="url(#mc2)" filter="url(#b1)">
    <path d="M438 406 L446 404 L452 408 L458 407 L460 414 L454 419 L446 417 L440 413 Z" fill="#0d4f88"/>
    <ellipse cx="466" cy="412" rx="3" ry="2.200" fill="#11599a"/>
    <ellipse cx="460.500" cy="419.800" rx="3.500" ry="2.500" fill="#11599a"/>
    <ellipse cx="452" cy="423.500" rx="3.500" ry="2" fill="#13609e"/>
    <path d="M431 392 L438 389 L446 392 L445 400 L437 402 L432 398 Z" fill="#1a6cb0" opacity="0.8"/>
    <path d="M455 383 L462 381 L468 386 L466 393 L458 394 L454 389 Z" fill="#1a6cb0" opacity="0.8"/>
    <path d="M470 396 L480 394 L484 402 L478 412 L470 408 Z" fill="#4aaaf0" opacity="0.8"/>
    <ellipse cx="475.500" cy="415.500" rx="2.500" ry="2" fill="#bfe6fc"/>
  </g>
  <!-- underwater rocks hint -->
  <g mask="url(#rkm)"><rect x="32" y="440" width="595" height="65" fill="#fff" filter="url(#rocks)" opacity="0.15"/></g>
  <!-- bottom right rocks -->
  <g filter="url(#b05)">
    <path d="M582 476 L594 467 L608 470 L620 478 L627 482 L627 505 L602 505 L590 497 L584 487 Z" fill="#2f8fd8"/>
    <path d="M588 475 L598 470 L608 476 L598 483 Z M604 487 L622 483 L627 490 L627 500 L610 498 Z M592 463 L606 459 L612 464 L600 467 Z M586 488 L596 490 L600 500 L590 497 Z" fill="#b0e0fc"/>
    <path d="M596 484 L606 482 L610 492 L600 494 Z M612 476 L620 480 L616 484 Z" fill="#062a46"/>
  </g>
</g>
<rect x="32.500" y="209.500" width="594" height="295" fill="none" stroke="#3f7ab8" stroke-width="1" opacity="0.7"/>
<rect x="31.500" y="208.500" width="595.500" height="296.500" fill="none" stroke="#a0a0a0" stroke-width="1"/>
</svg>
<!-- selection handles / rotate -->
<svg class="a" style="left:0;top:166px;overflow:hidden;" width="630" height="578" viewBox="0 166 630 578">
  <g fill="#fff" stroke="#949494" stroke-width="1.700">
    <path d="M329.500 184.500 V204" fill="none" stroke-width="1"/>
    <circle cx="31.500" cy="208.500" r="4.700"/><circle cx="329.500" cy="208.500" r="4.700"/><circle cx="627" cy="208.500" r="4.700"/>
    <circle cx="31.500" cy="357.300" r="4.700"/><circle cx="627" cy="357.300" r="4.700"/>
    <circle cx="31.500" cy="505.300" r="4.700"/><circle cx="329.500" cy="505.300" r="4.700"/><circle cx="627" cy="505.300" r="4.700"/>
  </g>
  <!-- rotate handle -->
  <g fill="none" stroke-linecap="butt">
    <path d="M332.600 181.300 A7 7 0 1 1 335.700 173.800" stroke="#8c8c8c" stroke-width="5.200"/>
    <path d="M330.800 172.300 H344.500 L337.600 179.800 Z" fill="#fff" stroke="#8c8c8c" stroke-width="1.300"/>
    <path d="M332.300 180.700 A7 7 0 1 1 335.750 175" stroke="#fff" stroke-width="2.700"/>
  </g>
  <!-- anchor -->
  <g fill="none" stroke="#3c6eb4" stroke-width="1.400">
    <path d="M9 213.300 a2.100 2.100 0 0 1 0 4.200 M9.600 217.500 V226"/>
    <path d="M9 226.300 q4.800 -1 5.300 -6.500"/>
    <path d="M11.800 220.600 l2.700 -1.300 l1 2.800" stroke-width="1.200"/>
  </g>
</svg>
<!-- pane header icons -->
<svg class="a" style="left:647px;top:166px;" width="320" height="595" viewBox="647 166 320 595">
  <!-- dropdown + close -->
  <path d="M896.5 187.5 h9 l-4.5 4.5 z" fill="#555"/>
  <path d="M938 185.5 l9 9 M947 185.5 l-9 9" stroke="#444" stroke-width="1.8" fill="none"/>
  <!-- bucket icon -->
  <g fill="none" stroke="#2b579a" stroke-width="1.6" stroke-linejoin="round">
    <path d="M668 222 L679 211 L688 220 L677 231 Z" fill="#fff"/>
    <path d="M676.5 219 V211.5 a2 2 0 0 1 4 0 V213" stroke-width="1.3"/>
    <circle cx="676.5" cy="219" r="1.2" fill="#2b579a"/>
  </g>
  <path d="M681 213.5 q9 1 9 10 q0 4 -3 6.5 q0 -6 -3 -9 z" fill="#2b579a"/>
  <!-- pentagon icon -->
  <g fill="none" stroke="#777" stroke-width="1.300" stroke-linejoin="round">
    <path d="M718.300 210.500 L728.200 218 L724.600 228.800 H712.200 L708.600 218 Z" fill="#fff"/>
    <path d="M712.200 228.800 H724.600" stroke="#555" stroke-width="1.800"/>
    <path d="M712.500 230.500 L711 234 M724.300 230.500 L725.800 234" stroke="#c2c2c2" stroke-width="1"/>
  </g>
  <path d="M712.500 230 H724.300 L725.500 233.500 H711.300 Z" fill="#f3f3f3"/>
  <!-- layout icon -->
  <g fill="none" stroke="#666" stroke-width="1.200">
    <path d="M749.500 218 v13.500 M747.500 218 h4 M747.500 231.500 h4"/>
    <path d="M753.500 212.500 h14 M753.500 210.500 v4 M767.500 210.500 v4"/>
    <rect x="753.500" y="217.500" width="14" height="14" fill="#6a6a6a" stroke="#6a6a6a"/>
    <path d="M760.500 220 v9 M756 224.500 h9" stroke="#fff" stroke-width="1.300"/>
    <path d="M760.500 219 l-2 2.500 h4 z M760.500 230 l-2 -2.500 h4 z M755 224.500 l2.500 -2 v4 z M766 224.500 l-2.500 -2 v4 z" fill="#fff" stroke="none"/>
  </g>
  <!-- picture icon -->
  <g>
    <rect x="787.500" y="211.500" width="21" height="21" fill="#f4f4f4" stroke="#555" stroke-width="1.3"/>
    <path d="M789 230.500 L796 222 L800 226.500 L803 223.500 L807 230.500 Z" fill="#555"/>
    <circle cx="803" cy="217" r="2" fill="#555"/>
  </g>
  <!-- header line with caret -->
  <path d="M661 251.500 H672 L678 244.500 L684 251.500 H952" fill="none" stroke="#c6c6c6" stroke-width="1"/>
  <!-- section triangles -->
  <path d="M674 262.500 V268 H668.500 Z" fill="#333"/>
  <path d="M669.500 691.500 L674 696 L669.500 700.500 Z" fill="none" stroke="#777" stroke-width="1"/>
  <!-- radios -->
  <g fill="#fff" stroke="#ababab" stroke-width="1">
    <circle cx="690" cy="295" r="5.7"/><circle cx="690" cy="317" r="5.7"/><circle cx="690" cy="339" r="5.7"/><circle cx="690" cy="361" r="5.7"/><circle cx="690" cy="383" r="5.7"/>
  </g>
  <circle cx="690" cy="361" r="2.800" fill="#555"/>
  <!-- faint separator -->
  <path d="M683 400.500 H936" stroke="#efefef" stroke-width="1"/>
</svg>
<!-- buttons -->
<div class="a" style="left:693px;top:430px;width:56px;height:24px;background:#fdfdfd;border:1px solid #ababab;"></div>
<div class="a" style="left:758px;top:430px;width:97px;height:24px;background:#f3f3f3;border:1px solid #eaeaea;"></div>
<div class="a" style="left:865px;top:430px;width:71px;height:24px;background:#fdfdfd;border:1px solid #ababab;border-right:none;"></div>
<!-- texture button -->
<div class="a" style="left:916px;top:460px;width:20px;height:24px;background:#fdfdfd;border:1px solid #c6c6c6;border-right:none;overflow:hidden;">
  <svg width="12" height="16" style="left:9px;top:4px;" viewBox="0 0 12 16"><g fill="#3c6eb4"><rect x="0" y="0" width="2" height="2"/><rect x="4" y="0" width="2" height="2"/><rect x="8" y="0" width="2" height="2"/><rect x="0" y="4" width="2" height="2"/><rect x="6" y="3" width="2" height="2"/><rect x="2" y="7" width="2" height="2"/><rect x="8" y="7" width="2" height="2"/><rect x="0" y="11" width="2" height="2"/><rect x="5" y="11" width="2" height="2"/><rect x="9" y="12" width="2" height="2"/><rect x="3" y="14" width="2" height="2"/></g></svg>
</div>
<!-- spin inputs -->
<div class="a" style="left:887px;top:493px;width:49px;height:21px;background:#fff;border:1px solid #c6c6c6;border-right:none;"></div>
<div class="a" style="left:887px;top:545px;width:49px;height:21px;background:#fff;border:1px solid #c6c6c6;border-right:none;"></div>
<div class="a" style="left:887px;top:572px;width:49px;height:21px;background:#fff;border:1px solid #c6c6c6;border-right:none;"></div>
<div class="a" style="left:887px;top:599px;width:49px;height:21px;background:#fff;border:1px solid #c6c6c6;border-right:none;"></div>
<div class="a" style="left:887px;top:626px;width:49px;height:21px;background:#fff;border:1px solid #c6c6c6;border-right:none;"></div>
<!-- slider -->
<div class="a" style="left:783px;top:502px;width:98px;height:1px;background:#9a9a9a;"></div>
<div class="a" style="left:782px;top:498px;width:2px;height:10px;background:#666;"></div>
<!-- checkboxes -->
<div class="a" style="left:693px;top:524px;width:13px;height:12px;background:#fff;border:1px solid #ababab;"></div>
<div class="a" style="left:693px;top:656px;width:13px;height:13px;background:#fff;border:1px solid #ababab;"></div>
<svg class="a" style="left:693px;top:656px;" width="13" height="13" viewBox="0 0 13 13"><path d="M3 6.500 L5.500 9.500 L10 3.200" fill="none" stroke="#555" stroke-width="1.2"/></svg>
<!-- red highlight box -->
<div class="a" style="left:676px;top:484px;width:270px;height:40px;border:3px solid #e63a2e;border-radius:7px;"></div>
<!-- pane horizontal scrollbar -->
<div class="a" style="left:663px;top:727px;width:271px;height:15px;background:#dadada;"></div>
<div class="a" style="left:663px;top:727px;width:15px;height:15px;background:#fff;border:1px solid #c2c2c2;"></div>
<div class="a" style="left:678px;top:727px;width:219px;height:15px;background:#fff;border:1px solid #ababab;"></div>
<div class="a" style="left:919px;top:727px;width:15px;height:15px;background:#fff;border:1px solid #c2c2c2;"></div>
<!-- status bar -->
<div class="a" style="left:9px;top:761px;width:958px;height:22px;background:#f1f1f1;border-top:1px solid #c8c8c8;"></div>
<div class="a" style="left:699px;top:762px;width:38px;height:21px;background:#c9c9c9;"></div>
<svg class="a" style="left:0;top:0;" width="968" height="792" viewBox="0 0 968 792">
  <!-- scrollbar arrows -->
  <g fill="#777">
    <path d="M638.500 173.500 l4 4.500 h-8 z"/>
    <path d="M638.500 737 l4 -4.500 h-8 z"/>
    <path d="M16 752.500 l4.500 -4 v8 z"/>
    <path d="M623 752.500 l-4.500 -4 v8 z"/>
    <path d="M667.500 734.500 l4.500 -4 v8 z"/>
    <path d="M929.500 734.500 l-4.500 -4 v8 z"/>
  </g>
  <!-- status icons -->
  <g fill="none" stroke="#666" stroke-width="1">
    <!-- proofing: open book + check -->
    <path d="M217.500 767.500 q-3 -1.500 -6 -0.500 v8.500 q3 -1 6 0.500 z"/>
    <path d="M217.500 767.500 q2 -1.200 4 -1 M217.500 776 q3 -1.500 6 -0.500 v-2.500"/>
    <path d="M219.500 770.500 l1.800 2 l3.200 -4.500" stroke-width="1.200"/>
    <!-- macro icon -->
    <rect x="307.500" y="769.500" width="9" height="7.500" fill="#fafafa"/>
    <path d="M310 766.500 h6.500 v3" />
    <path d="M311 767.500 h5.500" stroke-width="2"/>
    <path d="M309 772 h6.500 M309 774 h6.500 M311.500 770.500 v6 M313.500 770.500 v6" stroke="#8a8a8a"/>
    <circle cx="307" cy="767.500" r="2.400" fill="#666"/>
    <!-- read mode -->
    <path d="M679.500 766.500 v11"/>
    <path d="M679.500 766.500 q-3 -1.800 -6 -0.800 v9.500 q3 -1 6 0.800 M679.500 766.500 q3 -1.800 6 -0.800 v9.500 q-3 -1 -6 0.800"/>
    <path d="M675 768.500 h3 M675 770.500 h3 M675 772.500 h3 M675 774.500 h3 M681 768.500 h3 M681 770.500 h3 M681 772.500 h3 M681 774.500 h3" stroke="#777"/>
    <!-- print layout -->
    <rect x="711.500" y="765.500" width="13" height="12" fill="#e4e4e4" stroke="#555"/>
    <path d="M713.500 768.500 h9 M713.500 770.500 h9 M713.500 772.500 h9 M713.500 774.500 h9" stroke="#555"/>
    <!-- web layout -->
    <path d="M755 776.500 h-5.500 v-11 h10.500 v4.500"/>
    <path d="M751.500 768.500 h6.500 M751.500 770.500 h5 M751.500 772.500 h3" stroke="#777"/>
    <circle cx="758.500" cy="773.800" r="3.300" fill="#fff" stroke="#555" stroke-width="1.200"/>
    <path d="M756.500 772.500 q2 1 2 3.500 M759 771 q1.500 1.500 2.500 1.500" stroke="#555"/>
  </g>
  <!-- zoom slider -->
  <path d="M790 771.500 H890" stroke="#8a8a8a" stroke-width="1"/>
  <rect x="838" y="766" width="4" height="12" fill="#555"/>
  <path d="M780 771.500 h6" stroke="#555" stroke-width="2"/>
  <path d="M893.500 771.500 h8 M897.500 767.500 v8" stroke="#555" stroke-width="2"/>
</svg>

<!-- texts -->
<span class="t" style="left:229.40px;top:18.14px;font-size:12px;line-height:15px;color:#b6c5de;transform:scaleX(0.9923);">Как в Врде сделать рисунок прозрачным.docx - Word</span>
<span class="t" style="left:616.20px;top:18.14px;font-size:12px;line-height:15px;color:#c3cfe4;transform:scaleX(0.8830);">Средств...</span>
<span class="t" style="left:25.00px;top:51.54px;font-size:12px;line-height:15px;color:#ffffff;transform:scaleX(0.9758);">Файл</span>
<span class="t" style="left:75.50px;top:51.54px;font-size:12px;line-height:15px;color:#ffffff;transform:scaleX(0.9368);">Главная</span>
<span class="t" style="left:130.50px;top:51.54px;font-size:12px;line-height:15px;color:#ffffff;transform:scaleX(0.9303);">Вставка</span>
<span class="t" style="left:183.20px;top:51.54px;font-size:12px;line-height:15px;color:#ffffff;transform:scaleX(0.9617);">Дизайн</span>
<span class="t" style="left:234.50px;top:51.54px;font-size:12px;line-height:15px;color:#ffffff;transform:scaleX(0.9715);">Макет</span>
<span class="t" style="left:279.20px;top:51.54px;font-size:12px;line-height:15px;color:#ffffff;transform:scaleX(1.0059);">Ссылки</span>
<span class="t" style="left:333.50px;top:51.54px;font-size:12px;line-height:15px;color:#ffffff;transform:scaleX(0.9840);">Рассылки</span>
<span class="t" style="left:398.20px;top:51.54px;font-size:12px;line-height:15px;color:#ffffff;transform:scaleX(0.9798);">Рецензирование</span>
<span class="t" style="left:500.80px;top:51.54px;font-size:12px;line-height:15px;color:#ffffff;transform:scaleX(0.8840);">Вид</span>
<span class="t" style="left:531.20px;top:51.54px;font-size:12px;line-height:15px;color:#ffffff;transform:scaleX(0.9888);">Разработчик</span>
<span class="t" style="left:623.20px;top:51.54px;font-size:12px;line-height:15px;color:#2b579a;transform:scaleX(1.0084);">Формат</span>
<span class="t" style="left:697.00px;top:51.54px;font-size:12px;line-height:15px;color:#ffffff;">Формат</span>
<span class="t" style="left:782.50px;top:51.54px;font-size:12px;line-height:15px;color:#d3dcec;transform:scaleX(1.0442);">Помощн</span>
<span class="t" style="left:15.50px;top:115.94px;font-size:12px;line-height:15px;color:#3e3e3e;transform:scaleX(1.0272);">Фигуры</span>
<span class="t" style="left:15.50px;top:151.79px;font-size:11px;line-height:14px;color:#5e5e5e;transform:scaleX(1.0207);">Вставка фигур</span>
<span class="t" style="left:123.80px;top:102.53px;font-size:10px;line-height:12px;color:#000;transform:scaleX(1.0610);">Абв</span>
<span class="t" style="left:179.60px;top:102.53px;font-size:10px;line-height:12px;color:#ffffff;transform:scaleX(1.0610);">Абв</span>
<span class="t" style="left:235.60px;top:102.53px;font-size:10px;line-height:12px;color:#ffffff;transform:scaleX(1.0610);">Абв</span>
<span class="t" style="left:173.80px;top:151.79px;font-size:11px;line-height:14px;color:#5e5e5e;transform:scaleX(1.0114);">Стили фигур</span>
<span class="t" style="left:338.00px;top:115.94px;font-size:12px;line-height:15px;color:#a6a6a6;transform:scaleX(0.9882);">Экспресс-</span>
<span class="t" style="left:346.80px;top:131.94px;font-size:12px;line-height:15px;color:#a6a6a6;transform:scaleX(0.9779);">стили</span>
<span class="t" style="left:336.50px;top:151.79px;font-size:11px;line-height:14px;color:#5e5e5e;transform:scaleX(1.0415);">Стили WordArt</span>
<span class="t" style="left:463.20px;top:81.94px;font-size:12px;line-height:15px;color:#a6a6a6;transform:scaleX(0.9757);">Направление текста</span>
<span class="t" style="left:463.20px;top:105.14px;font-size:12px;line-height:15px;color:#333;transform:scaleX(0.9681);">Выровнять текст</span>
<span class="t" style="left:463.20px;top:127.74px;font-size:12px;line-height:15px;color:#a6a6a6;transform:scaleX(0.9416);">Создать связь</span>
<span class="t" style="left:501.20px;top:151.79px;font-size:11px;line-height:14px;color:#5e5e5e;transform:scaleX(0.9674);">Текст</span>
<span class="t" style="left:597.00px;top:113.94px;font-size:12px;line-height:15px;color:#333;transform:scaleX(1.0053);">Упорядочить</span>
<span class="t" style="left:676.20px;top:113.94px;font-size:12px;line-height:15px;color:#333;transform:scaleX(0.9455);">Размер</span>
<span class="t" style="left:661.20px;top:181.87px;font-size:20px;line-height:25px;color:#3562a6;transform:scaleX(1.0249);">Формат рисунка</span>
<span class="t" style="left:683.40px;top:260.24px;font-size:12px;line-height:15px;color:#2b579a;font-weight:bold;transform:scaleX(0.9584);">Заливка</span>
<span class="t" style="left:701.20px;top:288.64px;font-size:12px;line-height:15px;color:#3e3e3e;transform:scaleX(0.9779);"><u>Н</u>ет заливки</span>
<span class="t" style="left:701.20px;top:310.64px;font-size:12px;line-height:15px;color:#3e3e3e;transform:scaleX(0.9813);">Сплошна<u>я</u> заливка</span>
<span class="t" style="left:701.20px;top:332.64px;font-size:12px;line-height:15px;color:#3e3e3e;transform:scaleX(0.9592);"><u>Г</u>радиентная заливка</span>
<span class="t" style="left:701.20px;top:354.64px;font-size:12px;line-height:15px;color:#3e3e3e;transform:scaleX(0.9900);"><u>Р</u>исунок или текстура</span>
<span class="t" style="left:701.20px;top:376.64px;font-size:12px;line-height:15px;color:#3e3e3e;transform:scaleX(0.9684);"><u>У</u>зорная заливка</span>
<span class="t" style="left:693.30px;top:409.14px;font-size:12px;line-height:15px;color:#3e3e3e;transform:scaleX(1.0044);">Добавить рисунок из источника</span>
<span class="t" style="left:701.90px;top:434.54px;font-size:12px;line-height:15px;color:#3e3e3e;transform:scaleX(0.9616);">Фа<u>й</u>л...</span>
<span class="t" style="left:767.00px;top:434.54px;font-size:12px;line-height:15px;color:#a6a6a6;transform:scaleX(0.9772);"><u>Б</u>уфер обмена</span>
<span class="t" style="left:874.10px;top:434.54px;font-size:12px;line-height:15px;color:#3e3e3e;transform:scaleX(0.9573);"><u>В</u> Интернет</span>
<span class="t" style="left:693.30px;top:467.54px;font-size:12px;line-height:15px;color:#3e3e3e;transform:scaleX(0.9745);"><u>Т</u>екстура</span>
<span class="t" style="left:693.30px;top:496.94px;font-size:12px;line-height:15px;color:#3e3e3e;transform:scaleX(1.0122);">Прозрачност<u>ь</u></span>
<span class="t" style="left:894.30px;top:496.94px;font-size:12px;line-height:15px;color:#3e3e3e;transform:scaleX(0.8798);">0 %</span>
<span class="t" style="left:711.50px;top:523.74px;font-size:12px;line-height:15px;color:#3e3e3e;transform:scaleX(0.9900);">Преобразовать рисуно<u>к</u> в текстуру</span>
<span class="t" style="left:703.20px;top:549.14px;font-size:12px;line-height:15px;color:#3e3e3e;transform:scaleX(0.9838);">С<u>л</u>ева со смещением</span>
<span class="t" style="left:894.30px;top:548.54px;font-size:12px;line-height:15px;color:#3e3e3e;transform:scaleX(0.8798);">0 %</span>
<span class="t" style="left:703.20px;top:576.24px;font-size:12px;line-height:15px;color:#3e3e3e;transform:scaleX(0.9929);">С<u>п</u>рава со смещением</span>
<span class="t" style="left:894.30px;top:575.64px;font-size:12px;line-height:15px;color:#3e3e3e;transform:scaleX(0.8798);">0 %</span>
<span class="t" style="left:703.20px;top:603.34px;font-size:12px;line-height:15px;color:#3e3e3e;transform:scaleX(0.9872);">Свер<u>х</u>у со смещением</span>
<span class="t" style="left:894.30px;top:602.84px;font-size:12px;line-height:15px;color:#3e3e3e;transform:scaleX(0.8798);">0 %</span>
<span class="t" style="left:703.20px;top:630.44px;font-size:12px;line-height:15px;color:#3e3e3e;"><u>С</u>низу со смещением</span>
<span class="t" style="left:894.30px;top:629.94px;font-size:12px;line-height:15px;color:#3e3e3e;transform:scaleX(0.8798);">0 %</span>
<span class="t" style="left:711.50px;top:656.54px;font-size:12px;line-height:15px;color:#3e3e3e;transform:scaleX(0.9885);">П<u>о</u>вернуть вместе с фигурой</span>
<span class="t" style="left:683.40px;top:689.74px;font-size:12px;line-height:15px;color:#444;font-weight:bold;transform:scaleX(1.0150);">Линия</span>
<span class="t" style="left:16.40px;top:765.49px;font-size:11px;line-height:14px;color:#444;transform:scaleX(1.0103);">Страница 1 из 1</span>
<span class="t" style="left:120.00px;top:765.49px;font-size:11px;line-height:14px;color:#444;">Число слов: 0</span>
<span class="t" style="left:242.70px;top:765.49px;font-size:11px;line-height:14px;color:#444;transform:scaleX(1.0384);">русский</span>
<span class="t" style="left:917.40px;top:765.49px;font-size:11px;line-height:14px;color:#444;transform:scaleX(0.9550);">100 %</span>
</div>
</body>
</html>
